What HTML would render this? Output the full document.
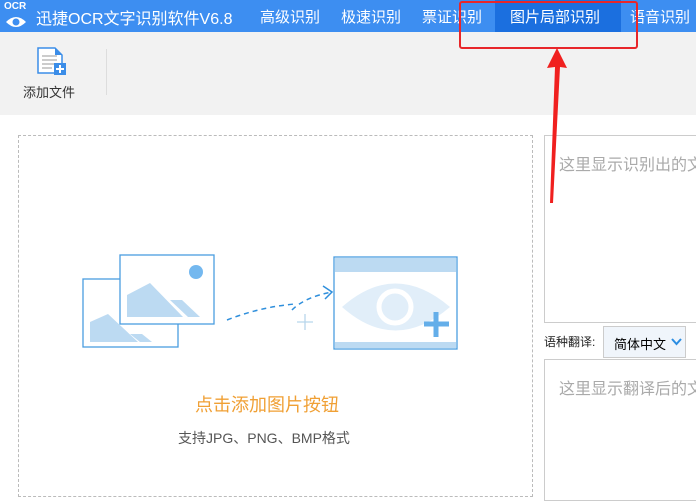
<!DOCTYPE html><html><head><meta charset="utf-8"><style>
body{margin:0;width:696px;height:488px;overflow:hidden;background:#fff;font-family:"Liberation Sans","Noto Sans CJK SC",sans-serif;position:relative}
.a{position:absolute}
.top{left:0;top:0;width:696px;height:32px;background:#3d8ef1;color:#fff;font-size:15px}
.top span{position:absolute;top:6px;white-space:nowrap}
</style></head><body>
<div class="a top">
<div class="a" style="left:4px;top:1px;font-size:10px;font-weight:bold">OCR</div>
<svg class="a" style="left:5px;top:15px" width="22" height="14"><path d="M1 7Q11 -3 21 7Q11 17 1 7Z" fill="#fff"/><circle cx="11" cy="7" r="3.5" fill="#3d8ef1"/></svg>
<span style="left:36px;top:5px;font-size:16px">迅捷OCR文字识别软件V6.8</span>
<span style="left:260px">高级识别</span>
<span style="left:341px">极速识别</span>
<span style="left:422px">票证识别</span>
<div class="a" style="left:495px;top:0;width:126px;height:32px;background:#1b6fdf"></div>
<span style="left:510px">图片局部识别</span>
<span style="left:630px">语音识别</span>
</div>
<div class="a" style="left:0;top:32px;width:696px;height:83px;background:#f2f2f2"></div>
<svg class="a" style="left:37px;top:47px" width="32" height="30"><path d="M1 1H18L25 8V26H1Z" fill="#fff" stroke="#3b8de8" stroke-width="1.5"/><path d="M18 1V8H25Z" fill="#3b8de8"/><path d="M5 9H20M5 13H20M5 17H18M5 21H15" stroke="#999"/><rect x="17" y="16" width="12" height="12" fill="#3b8de8"/><path d="M23 18V26M19 22H27" stroke="#fff" stroke-width="2"/></svg>
<div class="a" style="left:23px;top:82px;font-size:13px;color:#333">添加文件</div>
<div class="a" style="left:106px;top:49px;width:1px;height:46px;background:#ddd"></div>
<div class="a" style="left:18px;top:135px;width:513px;height:360px;border:1px dashed #bbb"></div>
<svg class="a" style="left:80px;top:252px" width="390" height="100">
<rect x="3" y="27" width="95" height="68" fill="#fff" stroke="#4a9de0" stroke-width="1.3"/>
<path d="M10 90V70L28 62L58 90Z" fill="#bcdaf2"/><path d="M50 82L62 82L72 90H60Z" fill="#bcdaf2"/>
<rect x="40" y="3" width="94" height="69" fill="#fff" stroke="#4a9de0" stroke-width="1.3"/>
<path d="M47 65V43L70 31L103 65Z" fill="#bcdaf2"/><path d="M90 48H102L120 65H108Z" fill="#bcdaf2"/>
<circle cx="116" cy="20" r="7" fill="#74b8ef"/>
<path d="M147 68Q180 55 215 52" stroke="#2f8fdc" stroke-width="1.5" fill="none" stroke-dasharray="5 4"/>
<path d="M212 58Q225 45 252 40" stroke="#2f8fdc" stroke-width="1.5" fill="none" stroke-dasharray="5 4"/>
<path d="M243 34L252 40L245 47" stroke="#2f8fdc" stroke-width="1.5" fill="none"/>
<path d="M225 62V78M217 70H233" stroke="#b8d6ec" stroke-width="1.3"/>
<rect x="254" y="5" width="123" height="92" fill="#fff" stroke="#4a9de0" stroke-width="1.3"/>
<rect x="255" y="6" width="121" height="14" fill="#bcdaf2"/><rect x="255" y="90" width="121" height="6" fill="#bcdaf2"/>
<path d="M262 55Q315 8 370 55Q315 102 262 55Z" fill="#e1eef9"/><circle cx="315" cy="55" r="16" fill="none" stroke="#fff" stroke-width="5"/>
<path d="M356 60V85M344 72H369" stroke="#64aee9" stroke-width="5"/>
</svg>
<div class="a" style="left:195px;top:391px;font-size:18px;color:#f0a035">点击添加图片按钮</div>
<div class="a" style="left:178px;top:428px;font-size:14px;color:#555">支持JPG、PNG、BMP格式</div>
<div class="a" style="left:544px;top:135px;width:160px;height:186px;border:1px solid #ccc"></div>
<div class="a" style="left:559px;top:151px;font-size:16px;color:#aaa;white-space:nowrap">这里显示识别出的文</div>
<div class="a" style="left:544px;top:333px;font-size:12px;color:#222">语种翻译:</div>
<div class="a" style="left:603px;top:326px;width:81px;height:30px;border:1px solid #ccc;background:#f0f5fb;font-size:13px"><span class="a" style="left:10px;top:7px">简体中文</span><svg class="a" style="left:67px;top:11px" width="11" height="8"><path d="M1 1L5.5 6L10 1" stroke="#2b8de2" stroke-width="2" fill="none"/></svg></div>
<div class="a" style="left:544px;top:359px;width:160px;height:140px;border:1px solid #ccc"></div>
<div class="a" style="left:559px;top:375px;font-size:16px;color:#aaa;white-space:nowrap">这里显示翻译后的文</div>
<div class="a" style="left:459px;top:1px;width:175px;height:44px;border:2px solid #e8262a;border-radius:3px"></div>
<svg class="a" style="left:540px;top:46px" width="30" height="160"><path d="M17 2L27 22L20 21L13 157L10 157L15 21L7 22Z" fill="#f0201f"/></svg>
</body></html>
